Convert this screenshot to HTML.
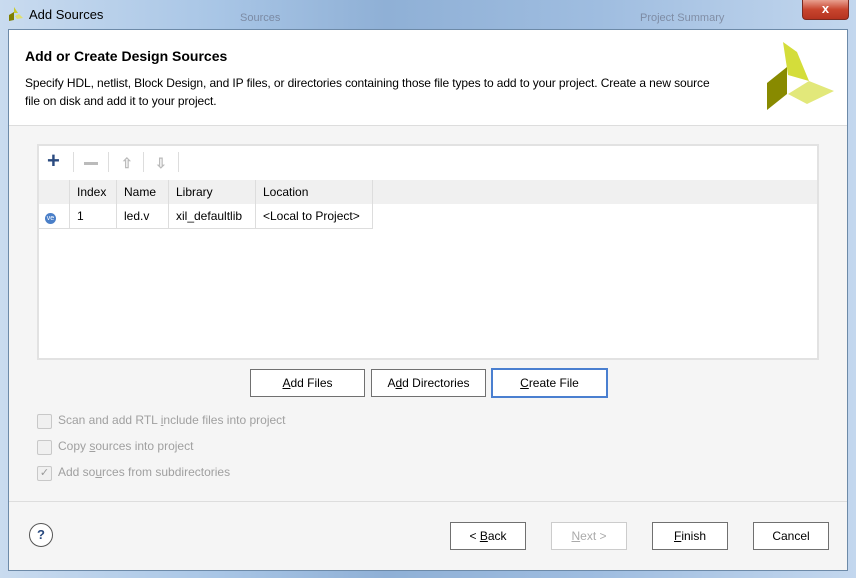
<!DOCTYPE html>
<html><head><style>
body{margin:0;width:856px;height:578px;overflow:hidden;font-family:"Liberation Sans",sans-serif;font-size:12px;color:#000;background:#6d8fb5;position:relative}
.abs{position:absolute}
#frame{left:0;top:0;width:856px;height:578px;background:linear-gradient(90deg,#c9dbef 0%,#a9c6e6 25%,#8fb0d6 45%,#9fbde0 70%,#c3d7ee 100%)}
#client{left:8px;top:29px;width:838px;height:540px;background:#f5f5f5;border:1px solid #6d8aa8}
#hdr{left:0;top:0;width:838px;height:95px;background:#fff;border-bottom:1px solid #ddd}
.btn{position:absolute;height:26px;border:1px solid #707070;background:#fff;text-align:center;line-height:26px;font-size:12px}
.th{position:absolute;top:0;height:24px;line-height:24px;border-right:1px solid #ddd;padding-left:7px;box-sizing:border-box}
.td{position:absolute;top:0;height:24px;line-height:24px;border-right:1px solid #ddd;padding-left:7px;box-sizing:border-box}
.cb{position:absolute;width:13px;height:13px;border:1px solid #c8c8c8;background:#f0f0f0;border-radius:2px}
.cl{position:absolute;color:#a0a0a0;font-size:12px}
</style></head><body>
<div id="frame" class="abs"></div>
<svg class="abs" style="left:8px;top:6px" width="16" height="16"><polygon points="6,1 10,7 6,7" fill="#c8cc30"/><polygon points="1,9 6,6 6,14 1,15" fill="#808000"/><polygon points="7,10 11,8 15,12 9,13" fill="#e0e070"/></svg>
<div class="abs" style="left:29px;top:7px;font-size:13px">Add Sources</div>
<div class="abs" style="left:240px;top:12px;font-size:11px;color:#556;opacity:.5">Sources</div>
<div class="abs" style="left:640px;top:12px;font-size:11px;color:#556;opacity:.5">Project Summary</div>
<div class="abs" style="left:802px;top:0;width:45px;height:19px;background:linear-gradient(#e8a090,#c8452e 50%,#b53320);border:1px solid #7a2a20;border-top:none;border-radius:0 0 4px 4px;color:#fff;text-align:center;font-weight:bold;line-height:18px;font-size:13px">x</div>
<div id="client" class="abs">
 <div id="hdr" class="abs">
  <div class="abs" style="left:16px;top:18px;font-weight:bold;font-size:14px">Add or Create Design Sources</div>
  <div class="abs" style="left:16px;top:44px;width:700px;line-height:18px;font-size:12px;letter-spacing:-0.1px">Specify HDL, netlist, Block Design, and IP files, or directories containing those file types to add to your project. Create a new source file on disk and add it to your project.</div>
  <svg class="abs" style="left:750px;top:8px" width="80" height="75"><polygon points="24,4 38,14 50,43 29,37" fill="#d4dd3a"/><polygon points="8,45 28,29 28,56 8,72" fill="#888a00"/><polygon points="29,56 50,43 75,53 48,66" fill="#e2e87a"/></svg>
 </div>
 <div class="abs" style="left:28px;top:114px;width:778px;height:212px;background:#fff;border:2px solid #e2e2e2">
  <div class="abs" style="left:8px;top:6px;font-size:22px;font-weight:bold;color:#2a4a7f;line-height:18px">+</div>
  <div class="abs" style="left:34px;top:6px;width:1px;height:20px;background:#ddd"></div>
  <div class="abs" style="left:45px;top:16px;width:14px;height:3px;background:#bbb"></div>
  <div class="abs" style="left:69px;top:6px;width:1px;height:20px;background:#ddd"></div>
  <div class="abs" style="left:82px;top:9px;color:#bbb;font-size:14px;font-weight:bold">&#8679;</div>
  <div class="abs" style="left:104px;top:6px;width:1px;height:20px;background:#ddd"></div>
  <div class="abs" style="left:116px;top:9px;color:#bbb;font-size:14px;font-weight:bold">&#8681;</div>
  <div class="abs" style="left:139px;top:6px;width:1px;height:20px;background:#ddd"></div>
  <div class="abs" style="left:0;top:34px;width:778px;height:24px;background:#f0f0f0">
   <div class="th" style="left:0;width:31px"></div>
   <div class="th" style="left:31px;width:47px">Index</div>
   <div class="th" style="left:78px;width:52px">Name</div>
   <div class="th" style="left:130px;width:87px">Library</div>
   <div class="th" style="left:217px;width:117px">Location</div>
  </div>
  <div class="abs" style="left:0;top:58px;width:334px;height:24px;border-bottom:1px solid #ddd">
   <div class="td" style="left:0;width:31px"><span style="display:inline-block;width:11px;height:11px;border-radius:50%;background:#4a7fc8;color:#fff;font-size:7px;line-height:11px;text-align:center;margin-left:-1px">ve</span></div>
   <div class="td" style="left:31px;width:47px">1</div>
   <div class="td" style="left:78px;width:52px">led.v</div>
   <div class="td" style="left:130px;width:87px">xil_defaultlib</div>
   <div class="td" style="left:217px;width:117px">&lt;Local to Project&gt;</div>
  </div>
 </div>
 <div class="btn" style="left:241px;top:339px;width:113px"><u>A</u>dd Files</div>
 <div class="btn" style="left:362px;top:339px;width:113px">A<u>d</u>d Directories</div>
 <div class="btn" style="left:482px;top:338px;width:113px;border:2px solid #4a7fd0"><u>C</u>reate File</div>
 <div class="cb" style="left:28px;top:384px"></div><div class="cl" style="left:49px;top:383px">Scan and add RTL <u>i</u>nclude files into project</div>
 <div class="cb" style="left:28px;top:410px"></div><div class="cl" style="left:49px;top:409px">Copy <u>s</u>ources into project</div>
 <div class="cb" style="left:28px;top:436px;color:#999;font-size:11px;line-height:13px;text-align:center">&#10003;</div><div class="cl" style="left:49px;top:435px">Add so<u>u</u>rces from subdirectories</div>
 <div class="abs" style="left:0;top:471px;width:838px;height:1px;background:#ddd"></div>
 <div class="abs" style="left:20px;top:493px;width:22px;height:22px;border:1px solid #555;border-radius:50%;background:#fff;text-align:center;line-height:22px;font-weight:bold;color:#2a4a7f;font-size:13px">?</div>
 <div class="btn" style="left:441px;top:492px;width:74px">&lt; <u>B</u>ack</div>
 <div class="btn" style="left:542px;top:492px;width:74px;border-color:#ccc;color:#aaa"><u>N</u>ext &gt;</div>
 <div class="btn" style="left:643px;top:492px;width:74px"><u>F</u>inish</div>
 <div class="btn" style="left:744px;top:492px;width:74px">Cancel</div>
</div>
</body></html>
